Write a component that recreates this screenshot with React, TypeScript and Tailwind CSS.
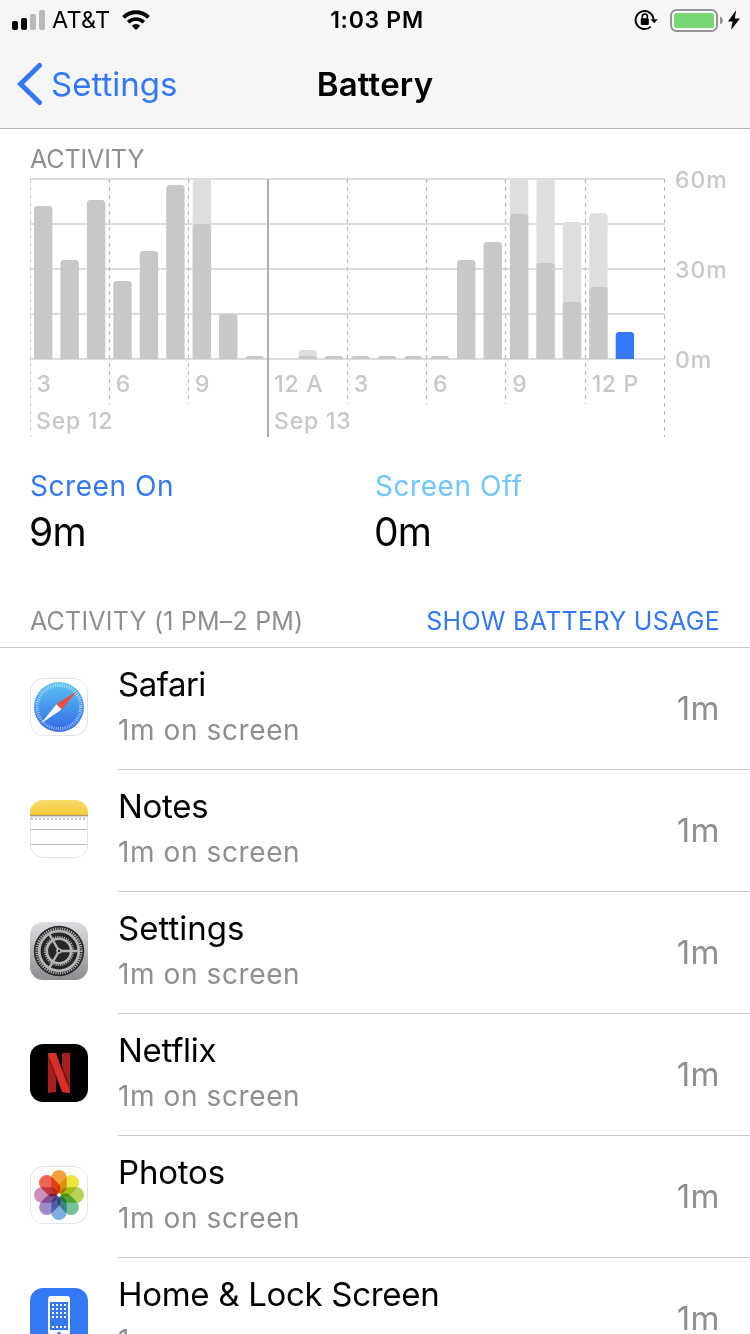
import type { ReactNode } from "react";

type Usage = { on: number; total?: number };

// One entry per hour, starting at 3 PM on Sep 12 (minutes)
const hours: Usage[] = [
  { on: 51 },
  { on: 33 },
  { on: 53 },
  { on: 26 },
  { on: 36 },
  { on: 58 },
  { on: 45, total: 60 },
  { on: 15 },
  { on: 1 },
  { on: 0 },
  { on: 1, total: 3 },
  { on: 1 },
  { on: 1 },
  { on: 1 },
  { on: 1 },
  { on: 1 },
  { on: 33 },
  { on: 39 },
  { on: 48.3, total: 60 },
  { on: 32, total: 60 },
  { on: 19, total: 45.7 },
  { on: 24, total: 48.6 },
  { on: 9 },
];

const ticks = ["3", "6", "9", "12 A", "3", "6", "9", "12 P"];

const HOUR = 26.44;
const BASE = 181;

function barPath(x: number, minutes: number) {
  const h = minutes * 3;
  const r = Math.min(3.5, h);
  const top = BASE - h;
  return `M${x} ${BASE}V${top + r}q0 ${-r} ${r} ${-r}h${18.4 - 2 * r}q${r} 0 ${r} ${r}V${BASE}z`;
}

function ActivityChart() {
  return (
    <svg
      width="750"
      height="262"
      viewBox="0 0 750 262"
      className="block shrink-0 overflow-visible font-medium"
    >
      {[1, 46, 91, 136, 181].map((y) => (
        <path key={y} d={`M30 ${y}H665`} stroke="#dcdcdc" strokeWidth="2" />
      ))}

      {/* Three-hour dividers */}
      {ticks.map((_, i) =>
        i === 3 ? null : (
          <path
            key={i}
            d={`M${Math.floor(30 + i * HOUR * 3) + 0.5} 1V${i === 0 ? 259 : 226}`}
            stroke={i === 0 ? "#d2d2d2" : "#bababa"}
            strokeWidth="1.2"
            strokeDasharray="4 4"
          />
        )
      )}
      <path d="M664.5 1V259" stroke="#bababa" strokeDasharray="4 4" />
      <path d="M268 1V259" stroke="#b0b0b0" strokeWidth="2" />

      {/* Bars */}
      {hours.map((hour, i) => {
        const x = 34 + i * HOUR;
        return (
          <g key={i}>
            {hour.total && <path d={barPath(x, hour.total)} fill="#dedede" />}
            {hour.on > 0 && (
              <path
                d={barPath(x, hour.on)}
                fill={i === hours.length - 1 ? "#3478f6" : "#c8c8c8"}
              />
            )}
          </g>
        );
      })}

      {/* Labels */}
      <g fill="#c7c7cc" fontSize="23">
        {ticks.map((label, i) => (
          <text key={i} x={36.4 + i * HOUR * 3} y="214" letterSpacing="0.7">
            {label}
          </text>
        ))}
        <text x="36" y="251" letterSpacing="0.8">
          Sep 12
        </text>
        <text x="274" y="251" letterSpacing="0.8">
          Sep 13
        </text>
        <g letterSpacing="1">
          <text x="675" y="9.5">60m</text>
          <text x="675" y="99.5">30m</text>
          <text x="675" y="189.5">0m</text>
        </g>
      </g>
    </svg>
  );
}

function SafariIcon() {
  return (
    <svg width="58" height="58" viewBox="0 0 58 58">
      <defs>
        <linearGradient id="safari" x1="0" y1="0" x2="0" y2="1">
          <stop offset="0" stopColor="#5ac4f4" />
          <stop offset="1" stopColor="#3468e6" />
        </linearGradient>
      </defs>
      <rect x="0.5" y="0.5" width="57" height="57" rx="13" fill="#fff" stroke="#e4e4e4" />
      <circle cx="29" cy="29" r="25" fill="url(#safari)" />
      <circle
        cx="29"
        cy="29"
        r="21.8"
        fill="none"
        stroke="#fff"
        strokeOpacity="0.65"
        strokeWidth="3.4"
        strokeDasharray="0.8 1.483"
      />
      <path d="M47 13 26.4 26.2l5.2 5.4z" fill="#eb4e3d" />
      <path d="M11.5 45 26.4 26.2l5.2 5.4z" fill="#fff" />
    </svg>
  );
}

function NotesIcon() {
  return (
    <svg width="58" height="58" viewBox="0 0 58 58">
      <defs>
        <linearGradient id="notes" x1="0" y1="0" x2="0" y2="1">
          <stop offset="0" stopColor="#f9dc6b" />
          <stop offset="1" stopColor="#f2ca38" />
        </linearGradient>
        <clipPath id="notes-clip">
          <rect width="58" height="58" rx="13" />
        </clipPath>
      </defs>
      <g clipPath="url(#notes-clip)">
        <rect width="58" height="58" fill="#fff" />
        <rect width="58" height="15" fill="url(#notes)" />
        <path d="M0 15.5h58" stroke="#a59b7a" />
        <path d="M0 16.7h58" stroke="#d8d8dc" strokeWidth="1.4" />
        <path d="M1 19h58" stroke="#c4c4c6" strokeWidth="2" strokeDasharray="2 2" />
        <path d="M0 29.5h58M0 44.5h58" stroke="#bdbdc1" />
      </g>
      <path
        d="M.5 17v28A12.5 12.5 0 0 0 13 57.5h32A12.5 12.5 0 0 0 57.5 45V17"
        fill="none"
        stroke="#e4e4e4"
      />
    </svg>
  );
}

function SettingsIcon() {
  return (
    <svg width="58" height="58" viewBox="0 0 58 58">
      <defs>
        <linearGradient id="settings" x1="0" y1="0" x2="0" y2="1">
          <stop offset="0" stopColor="#dedee2" />
          <stop offset="1" stopColor="#8c8c91" />
        </linearGradient>
      </defs>
      <rect width="58" height="58" rx="13" fill="url(#settings)" />
      <circle cx="29" cy="29" r="25.2" fill="#262628" />
      <g fill="none" stroke="#b4b4b7">
        <circle cx="29" cy="29" r="22.4" strokeWidth="2.4" strokeDasharray="1.2 1.145" />
        <circle cx="29" cy="29" r="19.8" strokeWidth="2.8" />
        <circle cx="29" cy="29" r="14.2" strokeWidth="1.8" strokeDasharray="1.1 1.131" />
        <circle cx="29" cy="29" r="12.2" strokeWidth="2.6" />
        <path d="M29 29h19.5M29 29 19.3 12.2M29 29 19.3 45.8" strokeWidth="2.4" />
      </g>
      <circle cx="29" cy="29" r="2.8" fill="#b4b4b7" />
      <circle cx="29" cy="29" r="1.2" fill="#262628" />
    </svg>
  );
}

function NetflixIcon() {
  return (
    <svg width="58" height="58" viewBox="0 0 58 58">
      <rect width="58" height="58" rx="13" fill="#000" />
      <path d="M18 9h8v39l-8 1z" fill="#a6211e" />
      <path d="M32 9h8v40l-8-1z" fill="#a6211e" />
      <path d="m18 13 8 22V26zM40 43l-8-22v11z" fill="#7d1512" />
      <path d="M18 9h8l14 40-8-1z" fill="#da2f28" />
    </svg>
  );
}

const petals = [
  "#f2a13c",
  "#ece33f",
  "#b5d458",
  "#72c496",
  "#7eaee0",
  "#a08bc9",
  "#cf8fbd",
  "#ee6453",
];

function PhotosIcon() {
  return (
    <svg width="58" height="58" viewBox="0 0 58 58">
      <rect x="0.5" y="0.5" width="57" height="57" rx="13" fill="#fff" stroke="#e4e4e4" />
      <g className="isolate">
        {petals.map((color, i) => (
          <rect
            key={color}
            x="21.3"
            y="4"
            width="15.4"
            height="24"
            rx="7.7"
            fill={color}
            transform={`rotate(${i * 45} 29 29)`}
            className="mix-blend-multiply"
          />
        ))}
      </g>
      <circle cx="29" cy="29" r="1.8" fill="#fff" />
    </svg>
  );
}

function HomeIcon() {
  return (
    <svg width="58" height="58" viewBox="0 0 58 58">
      <rect width="58" height="58" rx="13" fill="#3478f6" />
      <rect x="18" y="8" width="22" height="42" rx="3" fill="#fff" />
      <rect x="20" y="14" width="18" height="28" fill="#3478f6" />
      <g stroke="#fff" strokeWidth="2" strokeDasharray="2 2">
        <path d="M22 17h14M22 21h14M22 25h14M22 29h14M22 39h14" />
      </g>
      <circle cx="29" cy="45.5" r="1.8" fill="#3478f6" />
    </svg>
  );
}

const apps: { name: string; icon: ReactNode; tracking: string }[] = [
  { name: "Safari", icon: <SafariIcon />, tracking: "tracking-[-0.5px]" },
  { name: "Notes", icon: <NotesIcon />, tracking: "tracking-[-0.3px]" },
  { name: "Settings", icon: <SettingsIcon />, tracking: "tracking-normal" },
  { name: "Netflix", icon: <NetflixIcon />, tracking: "tracking-[-0.3px]" },
  { name: "Photos", icon: <PhotosIcon />, tracking: "tracking-[-0.2px]" },
  { name: "Home & Lock Screen", icon: <HomeIcon />, tracking: "tracking-[-0.3px]" },
];

function StatusBar() {
  return (
    <div className="grid h-10 grid-cols-3 items-center">
      <div className="flex items-center pl-3">
        <svg width="33" height="20" viewBox="0 0 33 20">
          <rect y="11" width="6" height="9" rx="2" />
          <rect x="9" y="8" width="6" height="12" rx="2" />
          <rect x="18" y="4" width="6" height="16" rx="2" fill="#b9b9b9" />
          <rect x="27" width="6" height="20" rx="2" fill="#b9b9b9" />
        </svg>
        <span className="ml-[7px] text-[23.5px] leading-10 tracking-[0.2px]">AT&amp;T</span>
        <svg width="28" height="20" viewBox="0 0 28 20" fill="none" className="ml-3 mb-px">
          <path d="M1.5 7.3a17.7 17.7 0 0 1 25 0" stroke="#000" strokeWidth="4" />
          <path d="M6.2 12.2a11.2 11.2 0 0 1 15.6 0" stroke="#000" strokeWidth="3.6" />
          <path d="M14 20l-4.2-4.3a6 6 0 0 1 8.4 0z" fill="#000" />
        </svg>
      </div>
      <div className="pl-1 text-center text-[23px] font-semibold leading-10 tracking-[0.7px]">
        1:03 PM
      </div>
      <div className="flex items-center justify-end pr-2.5">
        <svg width="24" height="22" viewBox="0 0 24 22" fill="none">
          <path d="M16.8 17.6A9 9 0 1 1 19.6 10.5" stroke="#000" strokeWidth="1.9" />
          <path d="M16.6 10.2h7.2l-3.6 4z" fill="#000" />
          <rect x="6.8" y="9.3" width="8" height="6.7" rx="1" fill="#000" />
          <path d="M8.3 10V7.6a2.5 2.5 0 0 1 5 0V10" stroke="#000" strokeWidth="1.5" />
        </svg>
        <svg width="54" height="24" viewBox="0 0 54 24" fill="none" className="ml-3">
          <rect x="1" y="2" width="46" height="21" rx="5.5" stroke="#949494" strokeWidth="2" />
          <rect x="4" y="5" width="40" height="15" rx="2.5" fill="#77d872" />
          <path d="M50 8.5c4 1.5 4 6.5 0 8z" fill="#949494" />
        </svg>
        <svg width="12" height="20" viewBox="0 0 12 20" className="ml-1">
          <path d="M8.2 0 0 11.4h4.6L3 20l9-11.6H6.8z" />
        </svg>
      </div>
    </div>
  );
}

function AppRow({ app }: { app: (typeof apps)[number] }) {
  return (
    <div className="flex h-[122px] shrink-0 pl-[30px]">
      <div className="mt-[30px] w-[88px] shrink-0">{app.icon}</div>
      <div className="flex flex-1 items-center justify-between border-b border-[#c8c7cc] pr-[30px] pb-0.5">
        <div className="-mt-0.5">
          <div className={`text-[33px] leading-[46px] ${app.tracking}`}>{app.name}</div>
          <div className="text-[28px] leading-[46px] tracking-[0.6px] text-[#8e8e93]">
            1m on screen
          </div>
        </div>
        <span className="text-[33px] leading-[46px] tracking-[0.5px] text-[#8e8e93]">1m</span>
      </div>
    </div>
  );
}

export default function App() {
  return (
    <div className="flex h-[1334px] w-[750px] flex-col overflow-hidden bg-white font-['Inter',sans-serif] text-black">
      {/* Navigation */}
      <header className="h-[129px] shrink-0 border-b border-[#b2b2b2] bg-linear-to-r from-[#f5f5f5] to-[#f8f8f8]">
        <StatusBar />
        <div className="grid h-[88px] grid-cols-3 items-center">
          <div className="flex items-center pl-[17px] text-[#3478f6]">
            <svg width="26" height="42" viewBox="0 0 26 42" fill="none">
              <path
                d="M22.5 2.5 3.5 21l19 18.5"
                stroke="currentColor"
                strokeWidth="5"
                strokeLinecap="round"
              />
            </svg>
            <span className="ml-2 text-[33px] leading-10 tracking-normal">Settings</span>
          </div>
          <h1 className="text-center text-[33px] font-semibold leading-10 tracking-[0.2px]">
            Battery
          </h1>
        </div>
      </header>

      {/* Chart */}
      <h2 className="h-[49px] shrink-0 pl-[30px] pt-[15px] text-[25px] leading-[30px] tracking-[-0.1px] text-[#8e8e93]">
        ACTIVITY
      </h2>
      <ActivityChart />

      {/* Totals */}
      <div className="grid h-[118px] shrink-0 grid-cols-2 pl-[30px] pr-[30px] pt-[26px]">
        <div>
          <div className="text-[28px] leading-10 tracking-[0.55px] text-[#3478f6]">Screen On</div>
          <div className="-ml-px text-[39px] leading-[52px] tracking-[-0.8px]">9m</div>
        </div>
        <div>
          <div className="text-[28px] leading-10 tracking-[0.55px] text-[#73c6f7]">Screen Off</div>
          <div className="-ml-px text-[39px] leading-[52px] tracking-[-0.8px]">0m</div>
        </div>
      </div>

      {/* App list */}
      <div className="flex h-[90px] shrink-0 items-end justify-between border-b border-[#c8c7cc] px-[30px] pb-2.5 text-[25px] leading-[32px]">
        <span className="tracking-[0.2px] text-[#8e8e93]">ACTIVITY (1 PM–2 PM)</span>
        <span className="tracking-[0.3px] text-[#3478f6]">SHOW BATTERY USAGE</span>
      </div>
      {apps.map((app) => (
        <AppRow key={app.name} app={app} />
      ))}
    </div>
  );
}
